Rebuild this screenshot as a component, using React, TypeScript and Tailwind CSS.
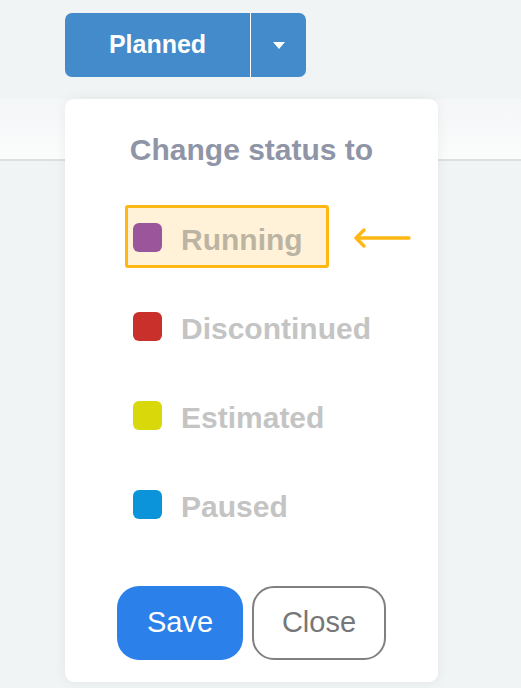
import { useState } from 'react';

const statuses = [
  { name: 'Running', color: 'bg-[#9b559b]' },
  { name: 'Discontinued', color: 'bg-[#c9302c]' },
  { name: 'Estimated', color: 'bg-[#d8d80b]' },
  { name: 'Paused', color: 'bg-[#0b94d9]' },
];

export default function App() {
  const [selected] = useState('Running');

  return (
    <div
      className="relative w-[521px] h-[688px] overflow-hidden bg-[#f1f4f5]"
      style={{ fontFamily: '"Liberation Sans", Arial, sans-serif' }}
    >
      {/* Status button group */}
      <div className="h-[99px] pt-[13px] pl-[65px]">
        <div className="flex h-[64px] w-[241px] rounded-[7px] overflow-hidden bg-[#438bcb]">
          <button className="flex-1 flex items-center justify-center text-white font-bold text-[25px]">
            Planned
          </button>
          <div className="w-px bg-white" />
          <button className="w-[55px] flex items-center justify-center">
            <svg width="12" height="7" viewBox="0 0 12 7">
              <path d="M0 0 L12 0 L6 7 Z" fill="#ffffff" />
            </svg>
          </button>
        </div>
      </div>

      {/* Page behind the popover */}
      <div className="h-[62px] bg-gradient-to-b from-[#f4f6f7] to-[#fbfcfc] border-b-2 border-[#dde0e1]" />

      {/* Popover */}
      <div className="absolute top-[99px] left-[65px] w-[373px] h-[583px] bg-white rounded-[9px] shadow-[0_0_14px_rgba(0,0,0,0.06)] flex flex-col pt-[33px]">
        <h2 className="text-center font-bold text-[30px] leading-[36px] text-[#8f95a7]">
          Change status to
        </h2>

        <div className="flex flex-col gap-[26px] mt-[37px] pl-[60px]">
          {statuses.map((s) => {
            const active = s.name === selected;
            return (
              <div key={s.name} className="flex items-center h-[63px]">
                <div
                  className={
                    active
                      ? 'flex items-center h-full w-[204px] border-[3px] border-[#fdb813] bg-[#fff2d8] rounded-[3px] pl-[5px]'
                      : 'flex items-center h-full border-[3px] border-transparent pl-[5px]'
                  }
                >
                  <span className={`w-[29px] h-[29px] mt-[2px] rounded-[6px] ${s.color}`} />
                  <span
                    className={
                      active
                        ? 'ml-[19px] pt-[5px] font-bold text-[30px] text-[#bcb4a3]'
                        : 'ml-[19px] pt-[5px] font-bold text-[30px] text-[#c4c4c4]'
                    }
                  >
                    {s.name}
                  </span>
                </div>
                {active && (
                  <svg className="ml-[24px] mt-[2px]" width="58" height="20" viewBox="0 0 58 20">
                    <path
                      d="M56 10 H3 M11 2 L3 10 L11 18"
                      fill="none"
                      stroke="#fdb813"
                      strokeWidth="3.4"
                      strokeLinecap="round"
                      strokeLinejoin="round"
                    />
                  </svg>
                )}
              </div>
            );
          })}
        </div>

        <div className="flex gap-[9px] mt-[51px] pl-[52px]">
          <button className="w-[126px] h-[74px] rounded-[22px] bg-[#2b80ea] text-white text-[29px]">
            Save
          </button>
          <button className="w-[134px] h-[74px] rounded-[22px] border-2 border-[#808080] text-[#777777] text-[29px]">
            Close
          </button>
        </div>
      </div>
    </div>
  );
}
